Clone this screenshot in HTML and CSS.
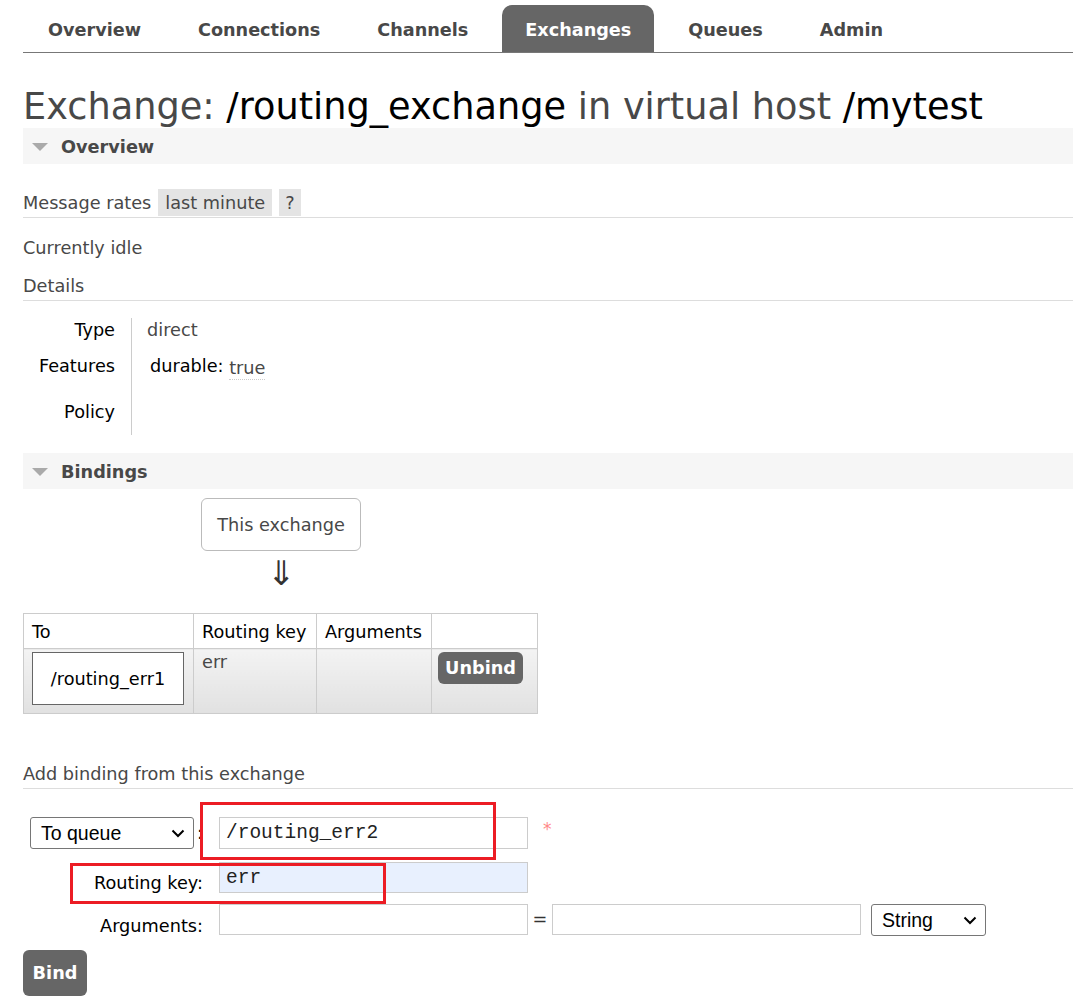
FILE: index.html
```html
<!DOCTYPE html>
<html>
<head>
<meta charset="utf-8">
<link rel="stylesheet" href="styles.css">
</head>
<body>
<div class="page">
  <nav class="menu">
    <ul>
      <li>Overview</li>
      <li>Connections</li>
      <li>Channels</li>
      <li class="active">Exchanges</li>
      <li>Queues</li>
      <li>Admin</li>
    </ul>
  </nav>

  <h1>Exchange: <b>/routing_exchange</b> in virtual host <b>/mytest</b></h1>

  <div class="section-h"><span class="tri"></span>Overview</div>

  <div class="rates">
    <span>Message rates</span>
    <span class="pill">last minute</span>
    <span class="pill q">?</span>
  </div>
  <p class="idle">Currently idle</p>
  <h3 class="sub">Details</h3>

  <div class="facts">
    <div class="fl r1">Type</div><div class="fv r1">direct</div>
    <div class="fl r2">Features</div><div class="fv r2"><span class="feat">durable:</span> <span class="tru">true</span></div>
    <div class="fl r3">Policy</div><div class="fv r3"></div>
  </div>

  <div class="section-h bind-h"><span class="tri"></span>Bindings</div>

  <div class="diagram">
    <div class="xbox">This exchange</div>
    <div class="arrow">⇓</div>
  </div>

  <table class="list">
    <colgroup>
      <col class="c1"><col class="c2"><col class="c3"><col class="c4">
    </colgroup>
    <thead>
      <tr><th>To</th><th>Routing key</th><th>Arguments</th><th></th></tr>
    </thead>
    <tbody>
      <tr>
        <td class="qcell"><div class="qbox">/routing_err1</div></td>
        <td class="rk">err</td>
        <td></td>
        <td class="bcell"><span class="btn unbind">Unbind</span></td>
      </tr>
    </tbody>
  </table>

  <h3 class="sub add">Add binding from this exchange</h3>

  <div class="form">
    <div class="frow row1">
      <div class="flab"><span class="sel sel-q">To queue<svg class="chev" width="14" height="9" viewBox="0 0 14 9"><path d="M1.5 1.5 L7 7 L12.5 1.5" fill="none" stroke="#000" stroke-width="2"/></svg></span><span class="colon">:</span></div>
      <div class="inp mono">/routing_err2</div>
      <span class="star">*</span>
    </div>
    <div class="frow row2">
      <div class="flab">Routing key:</div>
      <div class="inp mono fill">err</div>
    </div>
    <div class="frow row3">
      <div class="flab">Arguments:</div>
      <div class="inp"></div>
      <span class="eq">=</span>
      <div class="inp"></div>
      <span class="sel sel-s">String<svg class="chev" width="14" height="9" viewBox="0 0 14 9"><path d="M1.5 1.5 L7 7 L12.5 1.5" fill="none" stroke="#000" stroke-width="2"/></svg></span>
    </div>
    <span class="btn bindbtn">Bind</span>
  </div>

  <div class="mark m1"></div>
  <div class="mark m2"></div>
</div>
</body>
</html>
```

FILE: styles.css
```css
html, body {
  margin: 0;
  padding: 0;
  background: #fff;
}
body {
  font-family: "DejaVu Sans", Verdana, sans-serif;
  font-size: 17.7px;
  color: #484848;
}
.page {
  position: relative;
  padding-left: 23px;
  width: 1050px;
  min-height: 999px;
}
.menu ul {
  list-style: none;
  margin: 5px 0 0 0;
  padding: 0 0 0 2px;
  display: flex;
  gap: 11px;
  height: 47px;
  border-bottom: 1px solid #777;
}
.menu li {
  padding: 3px 23px 0;
  font-size: 17.65px;
  font-weight: bold;
  line-height: 44px;
  color: #484848;
  border-radius: 10px 10px 0 0;
}
.menu li.active {
  background: #666;
  color: #fff;
}
h1 {
  font-size: 36.7px;
  font-weight: normal;
  line-height: 42px;
  margin: 33px 0 0 0;
  color: #484848;
  white-space: nowrap;
}
h1 b {
  font-weight: normal;
  color: #000;
}
.section-h {
  height: 36px;
  background: #f6f6f6;
  display: flex;
  align-items: center;
  font-weight: bold;
  color: #484848;
  padding-top: 1px;
  box-sizing: border-box;
}
.tri {
  width: 0;
  height: 0;
  border-left: 8px solid transparent;
  border-right: 8px solid transparent;
  border-top: 8px solid #aaa;
  margin: 1px 13px 0 9px;
}
.rates {
  margin-top: 25px;
  display: flex;
  align-items: center;
  height: 28px;
  border-bottom: 1px solid #ddd;
}
.pill {
  background: #e4e4e4;
  height: 27px;
  line-height: 28px;
  padding: 0 7px;
  margin-left: 7px;
  align-self: flex-start;
}
.pill.q {
  margin-left: 7px;
  padding: 0 6px;
}
.idle {
  margin: 16px 0 0;
  line-height: 28px;
}
.sub {
  margin: 11px 0 0;
  font-size: 17.7px;
  font-weight: normal;
  line-height: 27px;
  border-bottom: 1px solid #ddd;
}
.facts {
  margin-top: 17px;
  display: grid;
  grid-template-columns: 108px 1fr;
  grid-template-rows: 36px 40px 41px;
  color: #000;
}
.fl {
  text-align: right;
  padding-right: 16px;
  line-height: 22px;
}
.fv {
  border-left: 1px solid #ccc;
  padding-left: 15px;
  line-height: 22px;
  color: #484848;
}
.r1 { padding-top: 1px; }
.r2 { padding-top: 1px; }
.r3 { padding-top: 7px; }
.feat {
  margin-left: 3px;
  color: #000;
}
.tru {
  border-bottom: 1px dotted #ccc;
  padding-bottom: 1px;
  position: relative;
  top: 2px;
}
.bind-h {
  margin-top: 18px;
}
.diagram {
  margin-left: 177px;
  width: 162px;
  display: flex;
  flex-direction: column;
  align-items: center;
  margin-top: 9px;
}
.xbox {
  width: 158px;
  height: 51px;
  border: 1px solid #bbb;
  border-radius: 6px;
  display: flex;
  align-items: center;
  justify-content: center;
}
.arrow {
  font-size: 34px;
  line-height: 44px;
  color: #333;
  font-family: "DejaVu Sans", sans-serif;
  font-weight: 300;
}
table.list {
  margin-top: 18px;
  border-collapse: collapse;
  table-layout: fixed;
  width: 514px;
  color: #000;
}
col.c1 { width: 170px; }
col.c2 { width: 123px; }
col.c3 { width: 115px; }
col.c4 { width: 106px; }
table.list th, table.list td {
  border: 1px solid #ccc;
  text-align: left;
  font-weight: normal;
  padding: 0 8px;
  white-space: nowrap;
}
table.list th {
  height: 32px;
  padding-top: 2px;
  overflow: visible;
}
table.list td {
  height: 61px;
  vertical-align: top;
  background: linear-gradient(#f3f3f3, #e1e1e1);
  padding-top: 3px;
  padding-bottom: 0;
}
table.list td.qcell {
  padding-left: 8px;
}
.qbox {
  width: 150px;
  height: 51px;
  border: 1px solid #666;
  background: #fff;
  display: flex;
  align-items: center;
  justify-content: center;
}
.rk {
  color: #484848;
  line-height: 20px;
}
table.list td.bcell { padding-left: 6px; }
.btn {
  display: inline-flex;
  align-items: center;
  justify-content: center;
  background: #666;
  color: #fff;
  font-weight: bold;
  border-radius: 6px;
}
.unbind {
  width: 85px;
  height: 32px;
}
.sub.add {
  margin-top: 47px;
  line-height: 27px;
}
.form {
  margin-top: 28px;
}
.frow {
  display: flex;
  align-items: center;
}
.row2 { margin-top: 13px; }
.row3 { margin-top: 9px; }
.flab {
  width: 180px;
  padding-right: 16px;
  text-align: right;
  color: #000;
  display: flex;
  align-items: center;
  justify-content: flex-end;
}
.row2 .flab { padding-top: 11px; }
.row3 .flab { padding-top: 13px; }
.row1 .flab {
  justify-content: flex-start;
  padding-left: 7px;
  width: 173px;
  padding-right: 16px;
}
.sel {
  display: inline-flex;
  align-items: center;
  justify-content: space-between;
  box-sizing: border-box;
  border: 1px solid #767676;
  border-radius: 3px;
  font-family: "Liberation Sans", Arial, sans-serif;
  font-size: 19.5px;
  color: #000;
  padding: 0 8px 0 10px;
  background: #fff;
}
.sel-q {
  width: 165px;
  height: 32px;
}
.sel-s {
  width: 115px;
  height: 32px;
  margin-left: 10px;
  margin-top: 2px;
}
.colon {
  margin-left: 3px;
  color: #000;
}
.inp {
  box-sizing: border-box;
  width: 309px;
  height: 32px;
  border: 1px solid #ccc;
  background: #fff;
  padding: 0 6px;
  display: flex;
  align-items: center;
}
.row2 .inp { height: 31px; }
.row3 .inp { height: 31px; }
.mono {
  font-family: "Liberation Mono", "Courier New", monospace;
  font-size: 19.5px;
  color: #222;
}
.fill {
  background: #e8f0fe;
}
.star {
  color: #f88;
  margin-left: 15px;
  align-self: flex-start;
  font-size: 17px;
  margin-top: 2px;
}
.eq {
  width: 24px;
  text-align: center;
  color: #333;
}
.bindbtn {
  margin-top: 14px;
  width: 64px;
  height: 46px;
}
.mark {
  position: absolute;
  border: 3px solid #ec1c24;
  box-sizing: border-box;
}
.m1 {
  left: 200px;
  top: 797px;
  width: 296px;
  height: 58px;
}
.m2 {
  left: 70px;
  top: 858px;
  width: 316px;
  height: 41px;
}
```
